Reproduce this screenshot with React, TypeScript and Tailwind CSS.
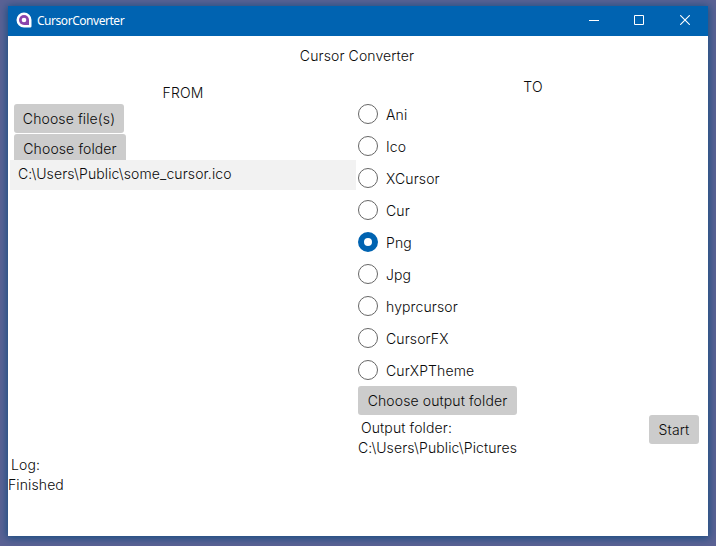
const formats = ['Ani', 'Ico', 'XCursor', 'Cur', 'Png', 'Jpg', 'hyprcursor', 'CursorFX', 'CurXPTheme'];

function TitleBar() {
  return (
    <header className="flex h-[30px] shrink-0 items-center bg-[#0063b1] text-white">
      <svg className="-mt-0.5 ml-2 h-4 w-4" viewBox="0 0 16 16">
        <path d="M8 .5a7.5 7.5 0 1 0 0 15h6.2a1.3 1.3 0 0 0 1.3-1.3V8A7.5 7.5 0 0 0 8 .5z" fill="#fff" />
        <path d="M8 3a5 5 0 1 0 0 10h5V8a5 5 0 0 0-5-5z" fill="#8b44ac" />
        <circle cx="8" cy="8" r="2.3" fill="#fff" />
      </svg>
      <h1 className="ml-[5px] font-['Noto_Sans',sans-serif] text-[12px] font-normal leading-4 tracking-[-0.46px]">CursorConverter</h1>
      <div className="ml-auto flex">
        <button className="flex h-[30px] w-[45px] items-center justify-center pb-0.5" aria-label="Minimize">
          <svg width="10" height="10" viewBox="0 0 10 10" stroke="#fff" fill="none"><path d="M0 5.5h10" /></svg>
        </button>
        <button className="flex h-[30px] w-[46px] items-center justify-center pb-0.5" aria-label="Maximize">
          <svg width="10" height="10" viewBox="0 0 10 10" stroke="#fff" fill="none"><path d="M.5.5h9v9h-9z" /></svg>
        </button>
        <button className="flex h-[30px] w-[46px] items-center justify-center pb-0.5" aria-label="Close">
          <svg width="10" height="10" viewBox="0 0 10 10" stroke="#fff" strokeWidth="1.1" fill="none"><path d="M.2.2l9.6 9.6M9.8.2L.2 9.8" /></svg>
        </button>
      </div>
    </header>
  );
}

function Button({ children, className }: { children: string; className: string }) {
  return (
    <button className={`block shrink-0 whitespace-nowrap rounded-[3px] bg-[#cccccc] text-center leading-5 tracking-[0.11px] ${className}`}>
      {children}
    </button>
  );
}

function Radio({ label, checked }: { label: string; checked: boolean }) {
  return (
    <div className="flex h-8 items-center gap-2" role="radio" aria-checked={checked}>
      <svg className="h-5 w-5 shrink-0" viewBox="0 0 20 20">
        {checked ? (
          <circle cx="10" cy="10" r="7" fill="#fff" stroke="#0063b1" strokeWidth="6" />
        ) : (
          <circle cx="10" cy="10" r="9.5" fill="#fff" stroke="#666" />
        )}
      </svg>
      <span className="pt-px leading-5">{label}</span>
    </div>
  );
}

export default function App() {
  return (
    <div className="h-[546px] w-[716px] overflow-hidden bg-[#5b6294] px-2 pt-1.5 font-[Inter,sans-serif] text-[14px] font-[350] leading-5 tracking-[0.11px] text-[#0a0a0a]">
      <main className="flex h-[530px] w-[700px] flex-col bg-white shadow-[0_1px_8px_1px_#174d80]">
        <TitleBar />
        <h2 className="mt-2.5 w-[698px] text-center leading-5">Cursor Converter</h2>
        <div className="mt-2.5 flex h-[380px]">
          <section className="flex w-[350px] flex-col">
            <h3 className="mt-[7px] text-center leading-5">FROM</h3>
            <Button className="ml-1.5 mt-px h-[29px] w-[110px]">Choose file(s)</Button>
            <div className="ml-1.5 mt-px h-[26px] shrink-0 overflow-hidden">
              <Button className="h-[29px] w-[112px]">Choose folder</Button>
            </div>
            <div className="ml-0.5 h-[30px] w-[346px] bg-[#f2f2f2] pl-2 pt-1 leading-5">C:\Users\Public\some_cursor.ico</div>
          </section>
          <section className="flex w-[350px] flex-col">
            <h3 className="mt-px text-center leading-5">TO</h3>
            <div className="mt-px" role="radiogroup">
              {formats.map((format) => (
                <Radio key={format} label={format} checked={format === 'Png'} />
              ))}
            </div>
            <Button className="h-[29px] w-[159px]">Choose output folder</Button>
            <div className="flex">
              <div className="pt-[3px]">
                <p className="pl-[3px]">Output folder:</p>
                <p>C:\Users\Public\Pictures</p>
              </div>
              <Button className="ml-auto mr-[9px] h-[29px] w-[50px]">Start</Button>
            </div>
          </section>
        </div>
        <footer className="-mt-px">
          <p className="pl-[3px]">Log:</p>
          <p>Finished</p>
        </footer>
      </main>
    </div>
  );
}
